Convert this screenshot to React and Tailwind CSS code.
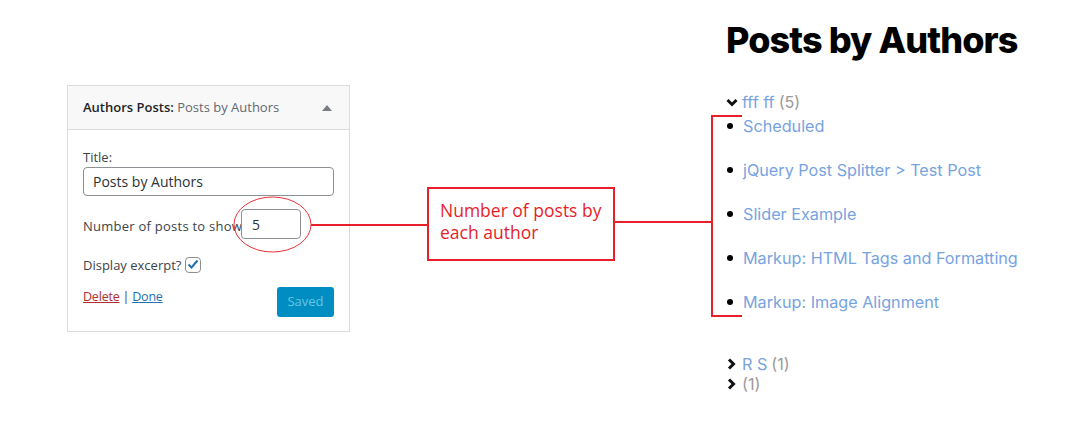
import React from 'react';

const posts = [
  'Scheduled',
  'jQuery Post Splitter > Test Post',
  'Slider Example',
  'Markup: HTML Tags and Formatting',
  'Markup: Image Alignment',
];

const ChevronDown = () => (
  <svg width="12" height="9" viewBox="0 0 12 9" className="shrink-0">
    <path d="M1.5 2 L6 6.5 L10.5 2" fill="none" stroke="#111" strokeWidth="3" />
  </svg>
);

const ChevronRight = () => (
  <svg width="12" height="12" viewBox="0 0 12 12" className="shrink-0">
    <path d="M3 1.5 L7.5 6 L3 10.5" fill="none" stroke="#111" strokeWidth="3" />
  </svg>
);

const Widget = () => (
  <div className="w-[283px] h-[247px] border border-[#dcdcde] bg-white font-['Open_Sans',sans-serif] text-[13px] text-[#3c434a]">
    <div className="h-[44px] flex items-center justify-between pl-[15px] pr-[17px] bg-[#f8f8f8] border-b border-[#dcdcde]">
      <div>
        <span className="font-semibold text-[#1d2327]">Authors Posts:</span>{' '}
        <span className="text-[#646970]">Posts by Authors</span>
      </div>
      <svg width="10" height="6" viewBox="0 0 10 6">
        <path d="M0 6 L5 0 L10 6 Z" fill="#787c82" />
      </svg>
    </div>
    <div className="px-[15px] pt-[18px]">
      <div className="leading-[18px] mb-[1px]">Title:</div>
      <div className="h-[29px] w-[251px] border border-[#8c8f94] rounded-[4px] flex items-center px-[9px] text-[14px] text-[#2c3338]">
        Posts by Authors
      </div>
      <div className="flex items-center mt-[13px]">
        <span className="w-[158px] shrink-0 whitespace-nowrap leading-[18px] mt-[4px] tracking-[0.25px]">Number of posts to show:</span>
        <div className="relative z-10 h-[30px] w-[60px] bg-white border border-[#8c8f94] rounded-[4px] flex items-center px-[10px] text-[14px] text-[#2c3338]">
          5
        </div>
      </div>
      <div className="flex items-center mt-[18px] h-[15px]">
        <span className="leading-[18px]">Display excerpt?</span>
        <span className="ml-[4px] w-[16px] h-[16px] border border-[#8c8f94] rounded-[4px] flex items-center justify-center">
          <svg width="12" height="11" viewBox="0 0 12 11">
            <path d="M1.5 5.5 L4.5 8.5 L10.5 1.5" fill="none" stroke="#2271b1" strokeWidth="2" />
          </svg>
        </span>
      </div>
      <div className="flex items-start justify-between mt-[15px]">
        <div className="leading-[18px] pt-[1px] text-[12.5px] tracking-[-0.2px]">
          <span className="text-[#b32d2e] underline">Delete</span>
          <span className="text-[#3c434a] mx-[3px]">|</span>
          <span className="text-[#2271b1] underline">Done</span>
        </div>
        <div className="h-[30px] w-[57px] rounded-[3px] bg-[#008ec2] text-[#66c6e4] flex items-center justify-center text-[13px]">
          Saved
        </div>
      </div>
    </div>
  </div>
);

const Annotation = () => (
  <div className="w-[188px] h-[74px] border-2 border-[#e81e2a] bg-white px-[11px] pt-[10px] font-['Open_Sans',sans-serif] text-[17.5px] leading-[22px] text-[#e81e2a]">
    Number of posts by
    <br />
    each author
  </div>
);

const AuthorsList = () => (
  <div className="font-['Inter',sans-serif]">
    <h1 className="text-[36px] font-extrabold leading-none tracking-[-0.9px] text-black mt-[22px]">
      Posts by Authors
    </h1>
    <div className="mt-[34px] text-[16.2px]">
      <div className="flex items-center gap-[4px] h-[20px]">
        <ChevronDown />
        <span className="text-[#77a3df]">fff ff</span>
        <span className="text-[#9a9a9a]">(5)</span>
      </div>
      <ul className="mt-[4px]">
        {posts.map((p, i) => (
          <li key={i} className="flex items-center h-[20px] mb-[24px] last:mb-0">
            <span className="w-[6px] h-[6px] rounded-full bg-black ml-[1px] mr-[10px]" />
            <span className="text-[#77a3df]">{p}</span>
          </li>
        ))}
      </ul>
      <div className="mt-[42px] flex items-center gap-[4px] h-[20px]">
        <ChevronRight />
        <span className="text-[#77a3df]">R S</span>
        <span className="text-[#9a9a9a]">(1)</span>
      </div>
      <div className="flex items-center gap-[4px] h-[20px]">
        <ChevronRight />
        <span className="text-[#9a9a9a]">(1)</span>
      </div>
    </div>
  </div>
);

export default function App() {
  return (
    <div className="relative w-[1092px] h-[424px] bg-white flex overflow-hidden">
      <div className="pl-[67px] pt-[85px] shrink-0">
        <Widget />
      </div>
      <div className="ml-[77px] pt-[187px] shrink-0">
        <Annotation />
      </div>
      <div className="ml-[111px] shrink-0">
        <AuthorsList />
      </div>
      <svg className="absolute inset-0 pointer-events-none" width="1092" height="424">
        <ellipse cx="272.5" cy="224.5" rx="38.5" ry="27.5" fill="none" stroke="#e8323b" strokeWidth="1" />
        <line x1="311" y1="225" x2="427" y2="225" stroke="#e81e2a" strokeWidth="2" />
        <line x1="614" y1="222" x2="713" y2="222" stroke="#e81e2a" strokeWidth="2" />
        <line x1="712" y1="115" x2="712" y2="317" stroke="#e81e2a" strokeWidth="2" />
        <line x1="711" y1="116" x2="742" y2="116" stroke="#e81e2a" strokeWidth="2" />
        <line x1="711" y1="316" x2="742" y2="316" stroke="#e81e2a" strokeWidth="2" />
      </svg>
    </div>
  );
}
